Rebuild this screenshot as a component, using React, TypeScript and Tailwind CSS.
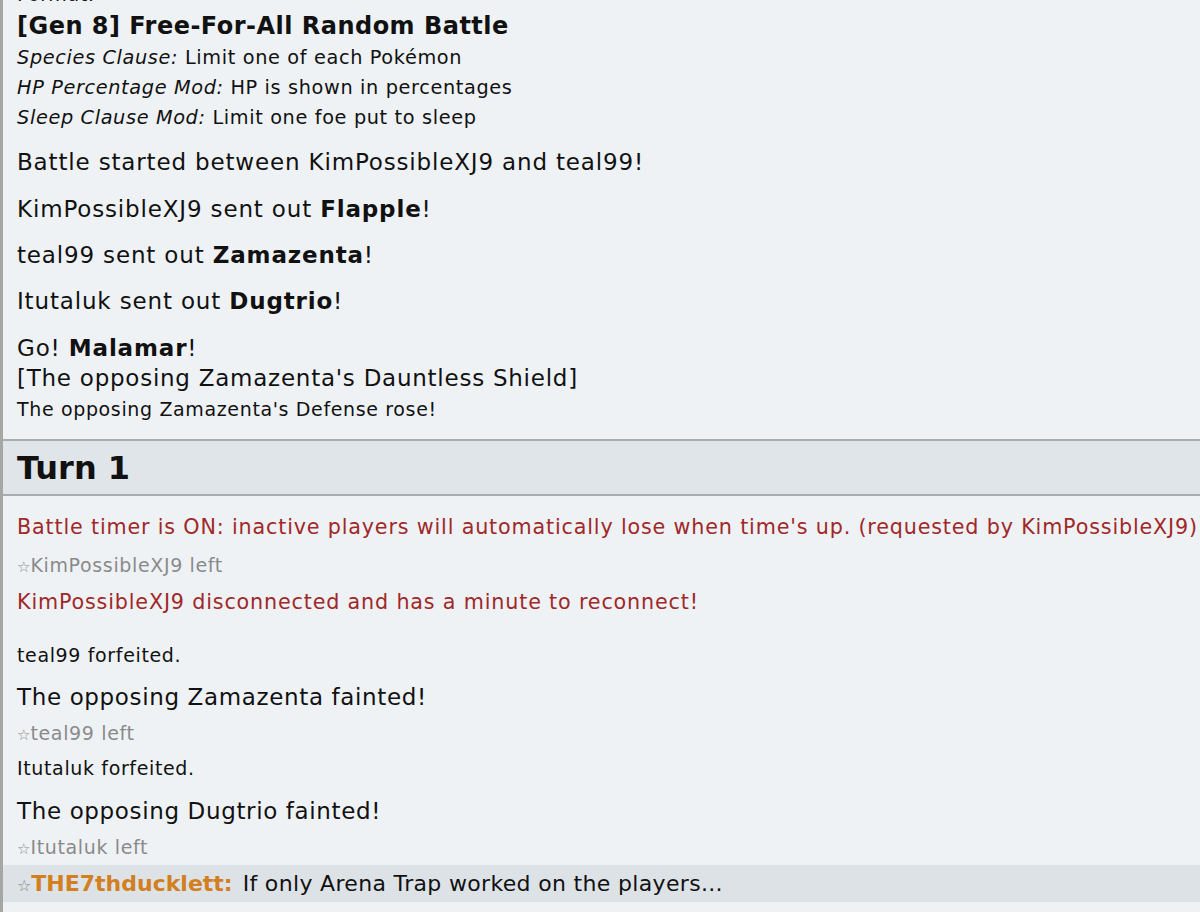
const font = "font-['DejaVu_Sans','Verdana',sans-serif]";

function Left({ name, mt }: { name: string; mt: string }) {
  return (
    <div className={`${mt} h-[30px] leading-[30px] text-[19px] tracking-[0.64px] text-[#8a8a8a]`}>
      <span className="text-[15px] tracking-normal">☆</span>
      {name} left
    </div>
  );
}

export default function App() {
  return (
    <div className={`${font} min-h-screen bg-[#eef2f5] text-[#111] border-l-[3px] border-[#a6a6a6] overflow-hidden`}>
      <div className="pl-[14px] tracking-[0.64px]">
        <div className="mt-[-21px] h-[30px] leading-[30px] text-[19px]">Format:</div>
        <div className="h-[34px] leading-[34px] text-[24px] font-bold tracking-[0.48px]">
          [Gen 8] Free-For-All Random Battle
        </div>
        <div className="h-[30px] leading-[30px] text-[19.3px]">
          <em>Species Clause:</em> Limit one of each Pokémon
        </div>
        <div className="h-[30px] leading-[30px] text-[19.3px]">
          <em>HP Percentage Mod:</em> HP is shown in percentages
        </div>
        <div className="h-[30px] leading-[30px] text-[19.3px]">
          <em>Sleep Clause Mod:</em> Limit one foe put to sleep
        </div>

        <div className="mt-[14px] h-[30px] leading-[30px] text-[23px] tracking-[0.84px]">
          Battle started between KimPossibleXJ9 and teal99!
        </div>
        <div className="mt-[17px] h-[30px] leading-[30px] text-[23px] tracking-[0.84px]">
          KimPossibleXJ9 sent out <strong>Flapple</strong>!
        </div>
        <div className="mt-[16px] h-[30px] leading-[30px] text-[23px] tracking-[0.84px]">
          teal99 sent out <strong>Zamazenta</strong>!
        </div>
        <div className="mt-[16px] h-[30px] leading-[30px] text-[23px] tracking-[0.84px]">
          Itutaluk sent out <strong>Dugtrio</strong>!
        </div>
        <div className="mt-[17px] h-[30px] leading-[30px] text-[23px] tracking-[0.84px]">
          Go! <strong>Malamar</strong>!
        </div>
        <div className="h-[30px] leading-[30px] text-[23px] tracking-[0.75px]">
          [The opposing Zamazenta's Dauntless Shield]
        </div>
        <div className="mt-[1px] h-[30px] leading-[30px] text-[19px]">
          The opposing Zamazenta's Defense rose!
        </div>
      </div>

      <div className="mt-[15px] border-y-2 border-[#a9adb0] bg-[#dfe5e8] h-[57px] pl-[14px] flex items-center">
        <h2 className="text-[32px] font-bold leading-none">Turn 1</h2>
      </div>

      <div className="pl-[14px] tracking-[0.64px]">
        <div className="mt-[16px] h-[30px] leading-[30px] text-[20.7px] tracking-[0.83px] text-[#a02828] whitespace-nowrap">
          Battle timer is ON: inactive players will automatically lose when time's up. (requested by KimPossibleXJ9)
        </div>
        <Left name="KimPossibleXJ9" mt="mt-[8px]" />
        <div className="mt-[7px] h-[30px] leading-[30px] text-[20.7px] tracking-[0.83px] text-[#a02828]">
          KimPossibleXJ9 disconnected and has a minute to reconnect!
        </div>
        <div className="mt-[23px] h-[30px] leading-[30px] text-[19px]">teal99 forfeited.</div>
        <div className="mt-[12px] h-[30px] leading-[30px] text-[23px]">
          The opposing Zamazenta fainted!
        </div>
        <Left name="teal99" mt="mt-[6px]" />
        <div className="mt-[5px] h-[30px] leading-[30px] text-[19px]">Itutaluk forfeited.</div>
        <div className="mt-[13px] h-[30px] leading-[30px] text-[23px]">
          The opposing Dugtrio fainted!
        </div>
        <Left name="Itutaluk" mt="mt-[6px]" />
      </div>

      <div className="mt-[3px] h-[37px] leading-[37px] bg-[#dde2e6] pl-[14px] text-[22px] whitespace-nowrap">
        <span className="text-[16px] text-[#8a8a8a]">☆</span>
        <strong className="text-[#d17f1f]">THE7thducklett:</strong>
        <span className="ml-[10px] tracking-[0.33px]">If only Arena Trap worked on the players...</span>
      </div>
    </div>
  );
}
